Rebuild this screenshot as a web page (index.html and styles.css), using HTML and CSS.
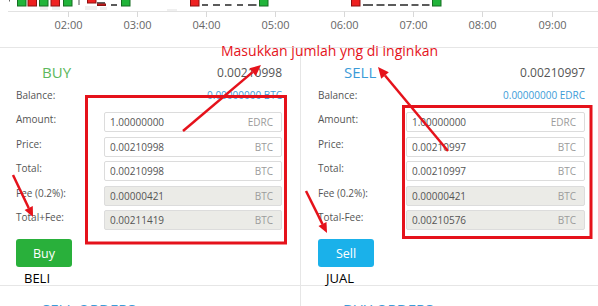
FILE: index.html
```html
<!DOCTYPE html>
<html>
<head>
<meta charset="utf-8">
<title>Trade</title>
<link rel="stylesheet" href="styles.css">
</head>
<body>
<div class="page">
  <div class="chart">
    <svg width="598" height="47" viewBox="0 0 598 47">
      <g class="vol">
        <rect x="40" y="6" width="8" height="4"/>
        <rect x="52" y="6" width="8" height="4"/>
        <rect x="85" y="6" width="12" height="4"/>
        <rect x="100" y="7" width="7" height="3"/>
        <rect x="167" y="9" width="10" height="2"/>
      </g>
      <rect class="mark" x="9" y="0" width="1" height="1.5"/>
      <rect class="cg" x="17.5" y="-1" width="8.5" height="7"/>
      <rect class="cr" x="28" y="-1" width="8.5" height="7"/>
      <rect class="cg" x="39.5" y="-1" width="8.5" height="7"/>
      <rect class="cr" x="51" y="-1" width="8.5" height="7"/>
      <rect class="cg" x="63.5" y="-1" width="8.5" height="7"/>
      <line class="wick" x1="79" y1="0" x2="79" y2="5"/>
      <rect class="cr" x="87.5" y="-1" width="8.5" height="4"/>
      <line class="dash" x1="97" y1="3" x2="105" y2="3"/>
      <rect class="cr" x="97.5" y="4" width="8" height="1.5"/>
      <line class="dash" x1="111" y1="5" x2="117" y2="5"/>
      <rect class="cg" x="121.5" y="-1" width="8.5" height="7"/>
      <rect class="cr" x="190.5" y="-1" width="8.5" height="7"/>
      <g class="dashes">
        <line x1="202" y1="5" x2="208" y2="5"/>
        <line x1="213" y1="5" x2="220" y2="5"/>
        <line x1="225" y1="5" x2="231.5" y2="5"/>
        <line x1="237" y1="5" x2="243" y2="5"/>
        <line x1="248" y1="5" x2="256.5" y2="5"/>
        <line x1="363" y1="5" x2="373" y2="5"/>
        <line x1="376.5" y1="5" x2="384.5" y2="5"/>
        <line x1="388" y1="5" x2="396" y2="5"/>
        <line x1="400" y1="5" x2="408" y2="5"/>
        <line x1="411.5" y1="5" x2="418.5" y2="5"/>
        <line x1="422" y1="5" x2="429.5" y2="5"/>
      </g>
      <rect class="cg" x="259.5" y="-1" width="8.5" height="7"/>
      <rect class="cr" x="351.5" y="-1" width="8.5" height="7"/>
      <rect class="cg" x="432.5" y="-1" width="8.5" height="7"/>
      <line class="axis" x1="8" y1="11.5" x2="598" y2="11.5"/>
      <g class="ticks">
        <line x1="68.5" y1="11.5" x2="68.5" y2="17"/>
        <line x1="137.5" y1="11.5" x2="137.5" y2="17"/>
        <line x1="206.5" y1="11.5" x2="206.5" y2="17"/>
        <line x1="275.5" y1="11.5" x2="275.5" y2="17"/>
        <line x1="344.5" y1="11.5" x2="344.5" y2="17"/>
        <line x1="413.5" y1="11.5" x2="413.5" y2="17"/>
        <line x1="482.5" y1="11.5" x2="482.5" y2="17"/>
        <line x1="552.5" y1="11.5" x2="552.5" y2="17"/>
      </g>
      <g class="tlabels">
        <text x="68.5" y="29">02:00</text>
        <text x="137.5" y="29">03:00</text>
        <text x="206.5" y="29">04:00</text>
        <text x="275.5" y="29">05:00</text>
        <text x="344.5" y="29">06:00</text>
        <text x="413.5" y="29">07:00</text>
        <text x="482.5" y="29">08:00</text>
        <text x="552.5" y="29">09:00</text>
      </g>
    </svg>
  </div>

  <div class="trade">
    <section class="panel panel-buy">
      <div class="head"><span class="title green">BUY</span><span class="price">0.00210998</span></div>
      <div class="balance"><span class="label">Balance:</span><span class="bal-val">0.00000000 BTC</span></div>
      <div class="rows">
        <div class="row"><span class="label">Amount:</span><div class="field"><span>1.00000000</span><span class="unit">EDRC</span></div></div>
        <div class="row"><span class="label">Price:</span><div class="field"><span>0.00210998</span><span class="unit">BTC</span></div></div>
        <div class="row"><span class="label">Total:</span><div class="field"><span>0.00210998</span><span class="unit">BTC</span></div></div>
        <div class="row"><span class="label">Fee (0.2%):</span><div class="field ro"><span>0.00000421</span><span class="unit">BTC</span></div></div>
        <div class="row"><span class="label">Total+Fee:</span><div class="field ro"><span>0.00211419</span><span class="unit">BTC</span></div></div>
      </div>
      <button class="btn btn-buy">Buy</button>
      <div class="note">BELI</div>
    </section>

    <section class="panel panel-sell">
      <div class="head"><span class="title blue">SELL</span><span class="price">0.00210997</span></div>
      <div class="balance"><span class="label">Balance:</span><span class="bal-val">0.00000000 EDRC</span></div>
      <div class="rows">
        <div class="row"><span class="label">Amount:</span><div class="field"><span>1.00000000</span><span class="unit">EDRC</span></div></div>
        <div class="row"><span class="label">Price:</span><div class="field"><span>0.00210997</span><span class="unit">BTC</span></div></div>
        <div class="row"><span class="label">Total:</span><div class="field"><span>0.00210997</span><span class="unit">BTC</span></div></div>
        <div class="row"><span class="label">Fee (0.2%):</span><div class="field ro"><span>0.00000421</span><span class="unit">BTC</span></div></div>
        <div class="row"><span class="label">Total-Fee:</span><div class="field ro"><span>0.00210576</span><span class="unit">BTC</span></div></div>
      </div>
      <button class="btn btn-sell">Sell</button>
      <div class="note">JUAL</div>
    </section>
  </div>

  <div class="orders">
    <div class="orders-col orders-left"><span class="title blue">SELL ORDERS</span></div>
    <div class="orders-col"><span class="title blue">BUY ORDERS</span></div>
  </div>

  <svg class="annot" width="598" height="306" viewBox="0 0 598 306">
    <rect x="86.5" y="96.5" width="199" height="146.5"/>
    <rect x="403.5" y="106.5" width="187.5" height="131"/>
    <line x1="183" y1="131" x2="252.6" y2="72.1"/>
    <polygon points="261,65 255.8,75.9 249.4,68.3"/>
    <line x1="448" y1="151" x2="385" y2="75.5"/>
    <polygon points="378,67 388.8,72.3 381.2,78.7"/>
    <line x1="13" y1="175" x2="28.7" y2="208"/>
    <polygon points="33,217 32.8,206.1 24.6,209.9"/>
    <line x1="306" y1="191" x2="322.5" y2="224.1"/>
    <polygon points="327,233 326.5,222.1 318.5,226.1"/>
  </svg>
  <div class="annot-text">Masukkan jumlah yng di inginkan</div>
</div>
</body>
</html>
```

FILE: styles.css
```css
* { box-sizing: border-box; margin: 0; padding: 0; }
body {
  margin: 0;
  background: #fff;
  font-family: "Open Sans", "Noto Sans", sans-serif;
  color: #555;
}
.page {
  position: relative;
  width: 598px;
  height: 306px;
  overflow: hidden;
}

/* chart */
.chart { height: 47px; }
.chart svg { display: block; }
.chart .vol rect { fill: #efefef; }
.chart .mark { fill: #666; }
.chart .cg { fill: #21b43a; stroke: #176d22; stroke-width: 1; }
.chart .cr { fill: #ee2020; stroke: #8c1010; stroke-width: 1; }
.chart .wick { stroke: #555; stroke-width: 1; }
.chart .dash, .chart .dashes line { stroke: #333; stroke-width: 1.6; }
.chart .axis { stroke: #e2e2e2; stroke-width: 1; }
.chart .ticks line { stroke: #d8d8d8; stroke-width: 1; }
.chart .tlabels text {
  font-family: "Open Sans", "Noto Sans", sans-serif;
  font-size: 11px;
  fill: #666;
  text-anchor: middle;
}

/* trade panels */
.trade {
  display: grid;
  grid-template-columns: 301px 297px;
  height: 238px;
  border-top: 1px solid #e6e6e6;
}
.panel {
  display: flex;
  flex-direction: column;
  align-items: stretch;
}
.panel-buy {
  border-right: 1px solid #e6e6e6;
  padding: 14px 18px 0 16px;
}
.panel-sell {
  padding: 14px 13px 0 17px;
}
.head {
  display: flex;
  justify-content: space-between;
  align-items: center;
  height: 20px;
}
.title {
  font-size: 15px;
  line-height: 20px;
  margin-left: 26px;
}
.green { color: #5cb85c; }
.blue { color: #3b9bd8; }
.price {
  font-size: 12px;
  color: #555;
}
.balance {
  display: flex;
  justify-content: space-between;
  align-items: center;
  height: 16px;
  margin-top: 5px;
}
.bal-val {
  font-size: 10px;
  color: #3b9bd8;
}
.label {
  width: 88px;
  flex: none;
  font-size: 10px;
  line-height: 15px;
  color: #555;
}
.rows {
  display: flex;
  flex-direction: column;
  gap: 4.5px;
  margin-top: 9px;
}
.row {
  display: flex;
  align-items: flex-start;
  height: 20px;
}
.field {
  flex: 1;
  display: flex;
  justify-content: space-between;
  align-items: center;
  height: 20px;
  border: 1px solid #dcdcdc;
  border-radius: 2px;
  padding: 0 8px 0 5px;
  font-size: 10px;
  color: #555;
  background: #fff;
}
.field.ro { background: #ebebe7; }
.unit { color: #9b9b9b; }
.btn {
  width: 56px;
  height: 28px;
  margin-top: 9px;
  border: 0;
  border-radius: 3px;
  color: #fff;
  font-family: "Open Sans", "Noto Sans", sans-serif;
  font-size: 12.5px;
  cursor: pointer;
}
.btn-buy { background: #29b03b; }
.btn-sell { background: #1ab1ea; }
.note {
  margin: 4px 0 0 8px;
  font-size: 13px;
  line-height: 14px;
  color: #000;
}

/* order headers */
.orders {
  display: grid;
  grid-template-columns: 301px 297px;
  border-top: 1px solid #e6e6e6;
  height: 21px;
}
.orders-col { padding-top: 12px; }
.orders-left { border-right: 1px solid #e6e6e6; }
.orders-col .title { margin-left: 42px; }

/* annotations */
.annot {
  position: absolute;
  top: 0;
  left: 0;
  pointer-events: none;
}
.annot rect { fill: none; stroke: #e5121b; stroke-width: 3; }
.annot line { stroke: #e5121b; stroke-width: 2.5; }
.annot polygon { fill: #e5121b; }
.annot-text {
  position: absolute;
  left: 221px;
  top: 43px;
  font-size: 14px;
  line-height: 16px;
  color: #e5121b;
  white-space: nowrap;
}
```
